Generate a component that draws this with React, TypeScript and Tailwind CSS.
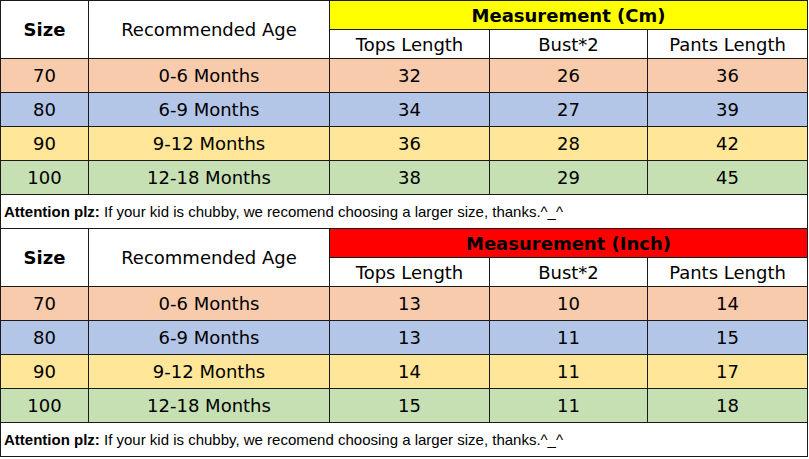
const comic = { fontFamily: '"DejaVu Sans", "Noto Sans", sans-serif' };

interface Row {
  size: string;
  age: string;
  tops: string;
  bust: string;
  pants: string;
  bg: string;
}

const cmRows: Row[] = [
  { size: "70", age: "0-6 Months", tops: "32", bust: "26", pants: "36", bg: "bg-[#f8cbad]" },
  { size: "80", age: "6-9 Months", tops: "34", bust: "27", pants: "39", bg: "bg-[#b4c6e7]" },
  { size: "90", age: "9-12 Months", tops: "36", bust: "28", pants: "42", bg: "bg-[#ffe699]" },
  { size: "100", age: "12-18 Months", tops: "38", bust: "29", pants: "45", bg: "bg-[#c6e0b4]" },
];

const inchRows: Row[] = [
  { size: "70", age: "0-6 Months", tops: "13", bust: "10", pants: "14", bg: "bg-[#f8cbad]" },
  { size: "80", age: "6-9 Months", tops: "13", bust: "11", pants: "15", bg: "bg-[#b4c6e7]" },
  { size: "90", age: "9-12 Months", tops: "14", bust: "11", pants: "17", bg: "bg-[#ffe699]" },
  { size: "100", age: "12-18 Months", tops: "15", bust: "11", pants: "18", bg: "bg-[#c6e0b4]" },
];

function Block({ title, titleBg, rows }: { title: string; titleBg: string; rows: Row[] }) {
  const td = "border border-[#1a1a1a] text-center text-[18px] text-black";
  return (
    <>
      <tr className="h-[29px]">
        <td rowSpan={2} className={`${td} bg-white font-bold`}>Size</td>
        <td rowSpan={2} className={`${td} bg-white`}>Recommended Age</td>
        <td colSpan={3} className={`${td} ${titleBg} text-[17px] font-bold`}>{title}</td>
      </tr>
      <tr className="h-[29px]">
        <td className={`${td} bg-white`}>Tops Length</td>
        <td className={`${td} bg-white`}>Bust*2</td>
        <td className={`${td} bg-white`}>Pants Length</td>
      </tr>
      {rows.map((r) => (
        <tr key={r.size} className={`h-[34px] ${r.bg}`}>
          <td className={td}>{r.size}</td>
          <td className={td}>{r.age}</td>
          <td className={td}>{r.tops}</td>
          <td className={td}>{r.bust}</td>
          <td className={td}>{r.pants}</td>
        </tr>
      ))}
      <tr className="h-[34px] bg-white">
        <td
          colSpan={5}
          className="border border-[#1a1a1a] px-[3px] pt-[2px] text-left text-[15px] text-black"
          style={{ fontFamily: '"Liberation Sans", Arial, sans-serif' }}
        >
          <span className="font-bold">Attention plz:</span> If your kid is chubby, we recomend choosing a larger size,
          thanks.^_^
        </td>
      </tr>
    </>
  );
}

export default function App() {
  return (
    <div className="h-[459px] w-[809px] bg-white" style={comic}>
      <table className="w-[807px] table-fixed border-collapse">
        <colgroup>
          <col className="w-[88px]" />
          <col className="w-[241px]" />
          <col className="w-[160px]" />
          <col className="w-[158px]" />
          <col className="w-[160px]" />
        </colgroup>
        <tbody>
          <Block title="Measurement (Cm)" titleBg="bg-[#ffff00]" rows={cmRows} />
          <Block title="Measurement (Inch)" titleBg="bg-[#ff0000]" rows={inchRows} />
        </tbody>
      </table>
    </div>
  );
}
